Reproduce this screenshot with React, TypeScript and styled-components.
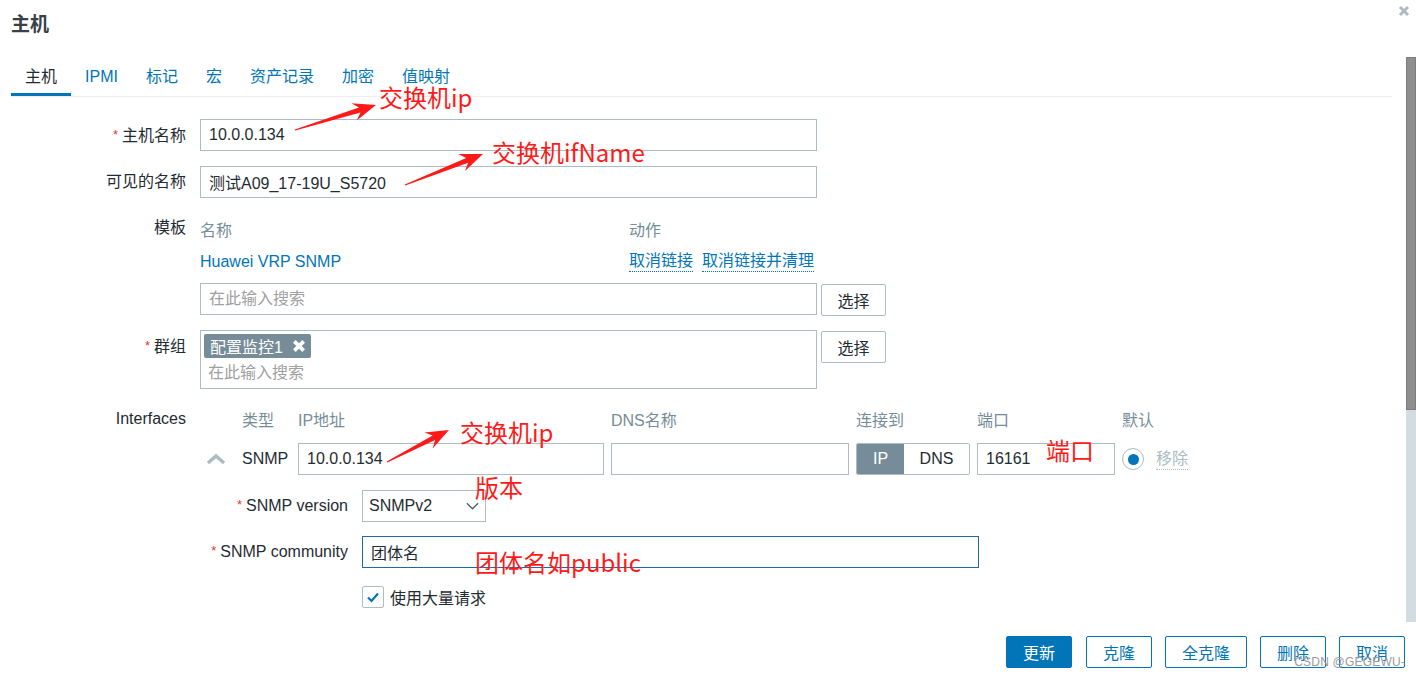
import React from "react";
import styled, { createGlobalStyle } from "styled-components";

const BLUE = "#0275b8";
const BORDER = "#acbbc4";
const TEXT = "#1f2c33";
const GREY = "#768d99";
const RED = "#ff1a1a";

const GlobalStyle = createGlobalStyle`
    html, body {
        margin: 0;
        padding: 0;
        background: #ffffff;
    }
    body {
        font-family: "Liberation Sans", "Noto Sans CJK SC", sans-serif;
        font-size: 16px;
        color: ${TEXT};
    }
    * {
        box-sizing: border-box;
    }
`;

const TABS = ["主机", "IPMI", "标记", "宏", "资产记录", "加密", "值映射"];

const FOOTER_BUTTONS = [
    { label: "更新", primary: true },
    { label: "克隆" },
    { label: "全克隆" },
    { label: "删除" },
    { label: "取消" },
];

const ARROWS = [
    { from: [295, 130], to: [376, 105] },
    { from: [405, 185], to: [483, 154] },
    { from: [387, 462], to: [449, 430] },
];

const NOTES = [
    { text: "交换机ip", x: 379, y: 84 },
    { text: "交换机ifName", x: 492, y: 139 },
    { text: "交换机ip", x: 460, y: 419 },
    { text: "端口", x: 1046, y: 437 },
    { text: "版本", x: 475, y: 474 },
    { text: "团体名如public", x: 475, y: 549 },
];

// builds the tapered red arrow polygon used by the screenshot annotations
const arrowPoints = (from: number[], to: number[]) => {
    const [x1, y1] = from;
    const [x2, y2] = to;
    const dx = x2 - x1;
    const dy = y2 - y1;
    const len = Math.hypot(dx, dy);
    const ux = dx / len;
    const uy = dy / len;
    const nx = -uy;
    const ny = ux;
    const at = (along: number, side: number) =>
        `${(x1 + ux * along + nx * side).toFixed(1)},${(y1 + uy * along + ny * side).toFixed(1)}`;
    return [
        at(0, 0.6),
        at(len - 17, 2.6),
        at(len - 23, 9),
        at(len, 0),
        at(len - 23, -9),
        at(len - 17, -2.6),
        at(0, -0.6),
    ].join(" ");
};

const App: React.FunctionComponent = () => {
    return (
        <>
            <GlobalStyle />
            <Dialog>
                <Header>
                    <Title>主机</Title>
                    <CloseIcon viewBox="0 0 12 12">
                        <path d="M2 2 L10 10 M10 2 L2 10" />
                    </CloseIcon>
                </Header>

                <Body>
                    <Scroll>
                        <Tabs>
                            {TABS.map((tab, i) => (
                                <Tab key={tab} active={i === 0}>{tab}</Tab>
                            ))}
                        </Tabs>

                        <Form>
                            <Row>
                                <Label><Star>*</Star>主机名称</Label>
                                <TextInput readOnly value="10.0.0.134" />
                            </Row>
                            <Row>
                                <Label>可见的名称</Label>
                                <TextInput readOnly value="测试A09_17-19U_S5720" />
                            </Row>

                            <Row>
                                <Label tall>模板</Label>
                                <div>
                                    <TemplateTable>
                                        <HeadCell>名称</HeadCell>
                                        <HeadCell>动作</HeadCell>
                                        <LinkCell><Link>Huawei VRP SNMP</Link></LinkCell>
                                        <LinkCell>
                                            <ActionLink>取消链接</ActionLink>
                                            <ActionLink>取消链接并清理</ActionLink>
                                        </LinkCell>
                                    </TemplateTable>
                                    <WithButton>
                                        <TextInput readOnly placeholder="在此输入搜索" />
                                        <SelectButton>选择</SelectButton>
                                    </WithButton>
                                </div>
                            </Row>

                            <Row>
                                <Label><Star>*</Star>群组</Label>
                                <WithButton>
                                    <MultiSelect>
                                        <Tag>
                                            配置监控1
                                            <TagX viewBox="0 0 12 12">
                                                <path d="M2 2 L10 10 M10 2 L2 10" />
                                            </TagX>
                                        </Tag>
                                        <Placeholder>在此输入搜索</Placeholder>
                                    </MultiSelect>
                                    <SelectButton>选择</SelectButton>
                                </WithButton>
                            </Row>

                            <Row>
                                <Label tall>Interfaces</Label>
                                <div>
                                    <IfaceGrid>
                                        <span />
                                        <ColHead>类型</ColHead>
                                        <ColHead>IP地址</ColHead>
                                        <ColHead>DNS名称</ColHead>
                                        <ColHead>连接到</ColHead>
                                        <ColHead>端口</ColHead>
                                        <ColHead>默认</ColHead>

                                        <Caret viewBox="0 0 20 12">
                                            <path d="M2 10 L10 3 L18 10" />
                                        </Caret>
                                        <TypeCell>SNMP</TypeCell>
                                        <TextInput readOnly value="10.0.0.134" />
                                        <TextInput readOnly value="" />
                                        <Segmented>
                                            <Segment active>IP</Segment>
                                            <Segment>DNS</Segment>
                                        </Segmented>
                                        <TextInput readOnly value="16161" />
                                        <DefaultCell>
                                            <Radio />
                                            <Remove>移除</Remove>
                                        </DefaultCell>
                                    </IfaceGrid>

                                    <SubForm>
                                        <SubRow>
                                            <SubLabel><Star>*</Star>SNMP version</SubLabel>
                                            <Select>
                                                SNMPv2
                                                <Chevron viewBox="0 0 14 8">
                                                    <path d="M1 1 L7 7 L13 1" />
                                                </Chevron>
                                            </Select>
                                        </SubRow>
                                        <SubRow>
                                            <SubLabel><Star>*</Star>SNMP community</SubLabel>
                                            <TextInput readOnly focused value="团体名" />
                                        </SubRow>
                                        <SubRow>
                                            <span />
                                            <CheckRow>
                                                <CheckBox>
                                                    <svg viewBox="0 0 16 16" width="16" height="16">
                                                        <path d="M3 8.5 L6.5 12 L13 4.5" fill="none" stroke={BLUE} strokeWidth="2.2" />
                                                    </svg>
                                                </CheckBox>
                                                使用大量请求
                                            </CheckRow>
                                        </SubRow>
                                    </SubForm>
                                </div>
                            </Row>
                        </Form>
                    </Scroll>
                    <ScrollTrack>
                        <ScrollThumb />
                    </ScrollTrack>
                </Body>

                <Footer>
                    {FOOTER_BUTTONS.map(btn => (
                        <FooterButton key={btn.label} primary={btn.primary}>{btn.label}</FooterButton>
                    ))}
                </Footer>

                <Watermark>CSDN @GEGEWU-</Watermark>

                <AnnotationLayer viewBox="0 0 1416 676">
                    {ARROWS.map((a, i) => (
                        <polygon key={i} points={arrowPoints(a.from, a.to)} fill={RED} />
                    ))}
                </AnnotationLayer>
                {NOTES.map((n, i) => (
                    <Note key={i} style={{ left: n.x, top: n.y }}>{n.text}</Note>
                ))}
            </Dialog>
        </>
    );
};

const Dialog = styled.div`
    position: relative;
    width: 1416px;
    height: 676px;
    overflow: hidden;
    display: flex;
    flex-direction: column;
    background: #ffffff;
`;

const Header = styled.div`
    height: 57px;
    display: flex;
    justify-content: space-between;
    align-items: flex-start;
    padding: 4px 6px 0 11px;
`;

const Title = styled.h1`
    margin: 9px 0 0;
    font-size: 19px;
    line-height: 24px;
    font-weight: 700;
    color: #384149;
`;

const CloseIcon = styled.svg`
    width: 12px;
    height: 12px;
    margin-top: 1px;
    path {
        stroke: ${BORDER};
        stroke-width: 3;
        fill: none;
    }
`;

const Body = styled.div`
    height: 565px;
    display: flex;
    padding-left: 11px;
`;

const Scroll = styled.div`
    width: 1381px;
    overflow: hidden;
`;

const ScrollTrack = styled.div`
    margin-left: 14px;
    width: 10px;
    height: 565px;
    background: #d3dce1;
`;

const ScrollThumb = styled.div`
    height: 353px;
    background: #8f8f8f;
    border: 1px solid #7c7c7c;
`;

const Tabs = styled.div`
    display: flex;
    border-bottom: 1px solid #ebeef0;
`;

const Tab = styled.div<{ active?: boolean }>`
    padding: 10px 14px 6px;
    line-height: 20px;
    font-size: 16px;
    color: ${p => (p.active ? TEXT : BLUE)};
    border-bottom: 3px solid ${p => (p.active ? BLUE : "transparent")};
`;

const Form = styled.div`
    display: flex;
    flex-direction: column;
    gap: 14px;
    padding-top: 22px;
`;

const Row = styled.div`
    display: grid;
    grid-template-columns: 175px 617px;
    column-gap: 14px;
    align-items: start;
`;

const Label = styled.div<{ tall?: boolean }>`
    text-align: right;
    line-height: ${p => (p.tall ? "31px" : "32px")};
    white-space: nowrap;
`;

const Star = styled.span`
    color: #e33734;
    font-size: 13px;
    margin-right: 4px;
    vertical-align: 2px;
`;

const TextInput = styled.input<{ focused?: boolean }>`
    width: 100%;
    height: 32px;
    padding: 0 8px;
    border: 1px solid ${p => (p.focused ? "#1f6aa5" : BORDER)};
    border-radius: 0;
    font-family: inherit;
    font-size: 16px;
    color: ${TEXT};
    background: #ffffff;
    outline: none;

    &::placeholder {
        color: #a0a0a0;
    }
`;

const TemplateTable = styled.div`
    display: grid;
    grid-template-columns: 429px 1fr;
    grid-template-rows: 33px 33px;
    align-items: center;
    margin-bottom: 5px;
`;

const HeadCell = styled.div`
    color: ${GREY};
`;

const LinkCell = styled.div`
    display: flex;
    gap: 9px;
    white-space: nowrap;
`;

const Link = styled.span`
    color: ${BLUE};
`;

const ActionLink = styled.span`
    color: ${BLUE};
    border-bottom: 1px dotted ${BLUE};
    line-height: 20px;
`;

const WithButton = styled.div`
    display: flex;
    gap: 4px;
    align-items: flex-start;
    width: 686px;

    & > :first-child {
        flex: 0 0 617px;
    }
`;

const SelectButton = styled.button`
    flex: 0 0 65px;
    height: 32px;
    margin-top: 1px;
    border: 1px solid ${BORDER};
    border-radius: 2px;
    background: #ffffff;
    font-family: inherit;
    font-size: 16px;
    color: ${TEXT};
    padding: 0;
`;

const MultiSelect = styled.div`
    height: 59px;
    border: 1px solid ${BORDER};
    padding: 3px;
    display: flex;
    flex-direction: column;
    align-items: flex-start;
    gap: 3px;
`;

const Tag = styled.div`
    display: flex;
    align-items: center;
    gap: 9px;
    height: 24px;
    padding: 0 5px 0 6px;
    background: ${GREY};
    border-radius: 2px;
    color: #ffffff;
    font-size: 16px;
`;

const TagX = styled.svg`
    width: 14px;
    height: 14px;
    path {
        stroke: #ffffff;
        stroke-width: 3.2;
        fill: none;
    }
`;

const Placeholder = styled.div`
    line-height: 24px;
    padding-left: 4px;
    color: #a0a0a0;
`;

const IfaceGrid = styled.div`
    display: grid;
    grid-template-columns: 35px 49px 306px 238px 114px 138px 120px;
    grid-template-rows: 30px 32px;
    column-gap: 7px;
    row-gap: 9px;
    align-items: center;
    margin-top: 1px;
`;

const ColHead = styled.div`
    color: ${GREY};
    white-space: nowrap;
`;

const Caret = styled.svg`
    width: 20px;
    height: 12px;
    margin-left: 6px;
    path {
        stroke: ${BORDER};
        stroke-width: 3.5;
        fill: none;
    }
`;

const TypeCell = styled.div`
    white-space: nowrap;
`;

const Segmented = styled.div`
    display: flex;
    height: 32px;
    border: 1px solid ${BORDER};
    border-radius: 2px;
    overflow: hidden;
`;

const Segment = styled.div<{ active?: boolean }>`
    flex: ${p => (p.active ? "0 0 47px" : "1")};
    display: flex;
    align-items: center;
    justify-content: center;
    background: ${p => (p.active ? GREY : "#ffffff")};
    color: ${p => (p.active ? "#ffffff" : TEXT)};
`;

const DefaultCell = styled.div`
    display: flex;
    align-items: center;
    gap: 12px;
`;

const Radio = styled.div`
    width: 22px;
    height: 22px;
    border: 1px solid ${BORDER};
    border-radius: 50%;
    display: flex;
    align-items: center;
    justify-content: center;

    &::after {
        content: "";
        width: 11px;
        height: 11px;
        border-radius: 50%;
        background: ${BLUE};
    }
`;

const Remove = styled.span`
    color: ${BORDER};
    border-bottom: 1px dotted ${BORDER};
    line-height: 20px;
`;

const SubForm = styled.div`
    display: flex;
    flex-direction: column;
    gap: 14px;
    margin-top: 14px;
`;

const SubRow = styled.div`
    display: grid;
    grid-template-columns: 148px 617px;
    column-gap: 14px;
    align-items: center;
    height: 32px;
`;

const SubLabel = styled.div`
    text-align: right;
    white-space: nowrap;
    line-height: 32px;
`;

const Select = styled.div`
    width: 124px;
    height: 32px;
    border: 1px solid ${BORDER};
    display: flex;
    align-items: center;
    justify-content: space-between;
    padding: 0 6px 0 6px;
`;

const Chevron = styled.svg`
    width: 13px;
    height: 8px;
    path {
        stroke: #4a5a63;
        stroke-width: 1.3;
        fill: none;
    }
`;

const CheckRow = styled.div`
    display: flex;
    align-items: center;
    gap: 6px;
    height: 32px;
`;

const CheckBox = styled.div`
    width: 22px;
    height: 22px;
    border: 1px solid ${BORDER};
    border-radius: 2px;
    display: flex;
    align-items: center;
    justify-content: center;
`;

const Footer = styled.div`
    flex: 1;
    display: flex;
    justify-content: flex-end;
    align-items: flex-start;
    gap: 13px;
    padding: 14px 11px 0 0;
`;

const FooterButton = styled.button<{ primary?: boolean }>`
    height: 32px;
    padding: 0 16px;
    border: 1px solid ${BLUE};
    border-radius: 2px;
    background: ${p => (p.primary ? BLUE : "#ffffff")};
    color: ${p => (p.primary ? "#ffffff" : BLUE)};
    font-family: inherit;
    font-size: 16px;
    margin-right: ${p => (p.primary ? "1px" : "0")};
`;

const Watermark = styled.div`
    position: absolute;
    right: 11px;
    bottom: 7px;
    font-size: 12px;
    color: #9a9a9a;
    letter-spacing: 0.2px;
    pointer-events: none;
`;

const AnnotationLayer = styled.svg`
    position: absolute;
    inset: 0;
    width: 1416px;
    height: 676px;
    pointer-events: none;
`;

const Note = styled.div`
    position: absolute;
    font-family: "Noto Sans CJK SC", sans-serif;
    font-size: 24px;
    line-height: 26px;
    color: ${RED};
    white-space: nowrap;
    pointer-events: none;
`;

export default App;
